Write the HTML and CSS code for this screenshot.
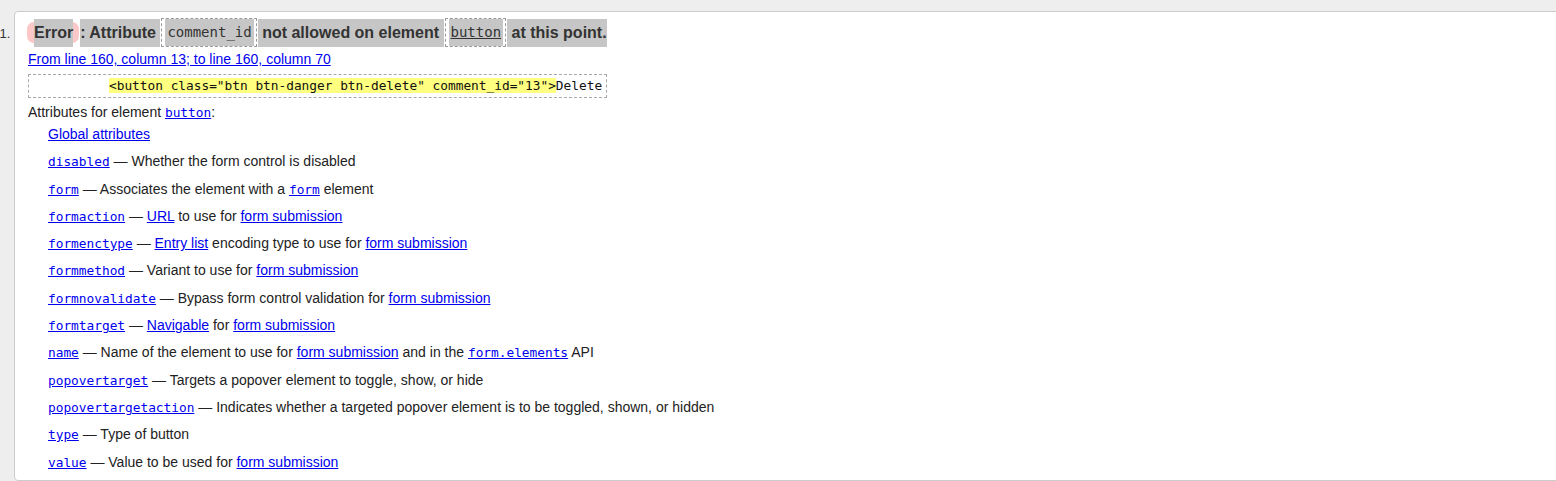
FILE: index.html
```html
<!DOCTYPE html>
<html lang="en">
<head>
<meta charset="utf-8">
<title>Validation message</title>
<link rel="stylesheet" href="styles.css">
</head>
<body>
<ol class="messages">
  <li class="card">
    <p class="msg"><span class="badge"><span class="hl">Error</span></span><span class="hl">: Attribute </span><code class="cbox"><span class="cin">comment_id</span></code><span class="hl"> not allowed on element </span><code class="cbox"><a class="cin clink" href="#">button</a></code><span class="hl"> at this point.</span></p>
    <p class="loc"><a href="#">From line 160, column 13; to line 160, column 70</a></p>
    <p class="extract-row"><code class="extract"><mark>&lt;button class="btn btn-danger btn-delete" comment_id="13"&gt;</mark>Delete</code></p>
    <dl class="attrs">
      <dt>Attributes for element <a class="mono" href="#">button</a>:</dt>
      <dd><a href="#">Global attributes</a></dd>
      <dd><a class="mono" href="#">disabled</a> — Whether the form control is disabled</dd>
      <dd><a class="mono" href="#">form</a> — Associates the element with a <a class="mono" href="#">form</a> element</dd>
      <dd><a class="mono" href="#">formaction</a> — <a href="#">URL</a> to use for <a href="#">form submission</a></dd>
      <dd><a class="mono" href="#">formenctype</a> — <a href="#">Entry list</a> encoding type to use for <a href="#">form submission</a></dd>
      <dd><a class="mono" href="#">formmethod</a> — Variant to use for <a href="#">form submission</a></dd>
      <dd><a class="mono" href="#">formnovalidate</a> — Bypass form control validation for <a href="#">form submission</a></dd>
      <dd><a class="mono" href="#">formtarget</a> — <a href="#">Navigable</a> for <a href="#">form submission</a></dd>
      <dd><a class="mono" href="#">name</a> — Name of the element to use for <a href="#">form submission</a> and in the <a class="mono" href="#">form.elements</a> API</dd>
      <dd><a class="mono" href="#">popovertarget</a> — Targets a popover element to toggle, show, or hide</dd>
      <dd><a class="mono" href="#">popovertargetaction</a> — Indicates whether a targeted popover element is to be toggled, shown, or hidden</dd>
      <dd><a class="mono" href="#">type</a> — Type of button</dd>
      <dd><a class="mono" href="#">value</a> — Value to be used for <a href="#">form submission</a></dd>
    </dl>
  </li>
</ol>
</body>
</html>
```

FILE: styles.css
```css
html, body {
  margin: 0;
  padding: 0;
  background: #eeeeee;
  overflow: hidden;
}

body {
  font-family: "Liberation Sans", Arial, sans-serif;
  font-size: 14px;
  color: #222;
}

a {
  color: #0000ee;
  text-decoration: underline;
}

.messages {
  margin: 0;
  padding: 0 0 0 14px;
}

.card {
  margin: 11px -30px 0 0;
  padding: 6px 0 9px 13px;
  background: #fff;
  border: 1px solid #cccccc;
  border-radius: 4px;
  color: #222;
  font-size: 14px;
}

.card::marker {
  color: #333;
  font-size: 13px;
}

.msg {
  margin: 0;
  height: 29px;
  display: flex;
  align-items: center;
  font-weight: bold;
  font-size: 16px;
  color: #333;
}

.badge {
  display: flex;
  align-items: center;
  height: 21px;
  padding: 0 6px 0 7px;
  margin-left: -1px;
  background: #fcc7c7;
  border-radius: 7px;
}

.hl {
  display: block;
  line-height: 28px;
  height: 28px;
  background: #c6c6c6;
  white-space: pre;
}

.msg > .hl {
  margin-left: 1px;
}

.cbox {
  display: block;
  height: 27px;
  margin-left: 1px;
  padding: 0 2px 0 3px;
  border: 1px dashed #9a9a9a;
  font-family: "DejaVu Sans Mono", "Liberation Mono", monospace;
  font-weight: normal;
  font-size: 14px;
}

.cin {
  display: block;
  height: 27px;
  line-height: 27px;
  padding: 0 2px;
  background: #c6c6c6;
  color: #333;
}

.clink {
  color: #333;
}

.loc {
  margin: 4px 0 0;
  line-height: 17px;
}

.extract-row {
  margin: 6px 0 0;
  line-height: 0;
}

.extract {
  display: inline-block;
  padding: 2px 4px 2px 80px;
  border: 1px dashed #a8a8a8;
  font-family: "DejaVu Sans Mono", "Liberation Mono", monospace;
  font-size: 12.8px;
  line-height: 18px;
  color: #111;
  white-space: pre;
}

.extract mark {
  background: #ffff80;
  color: #111;
}

.attrs {
  margin: 6px 0 0;
  display: flex;
  flex-direction: column;
  line-height: 17px;
  color: #222;
}

.attrs dt,
.attrs dd {
  height: 17px;
  white-space: nowrap;
}

.attrs dt {
  margin: 0;
}

.attrs dd {
  margin: 10.3px 0 0 20px;
}

.attrs dt + dd {
  margin-top: 5px;
}

.mono {
  font-family: "DejaVu Sans Mono", "Liberation Mono", monospace;
  font-size: 12.8px;
  line-height: 1;
}
```
